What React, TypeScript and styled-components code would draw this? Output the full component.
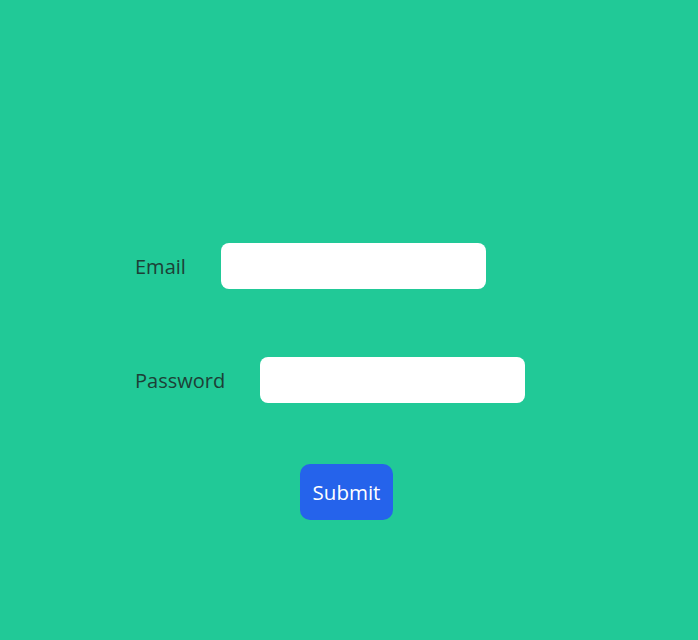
import React from "react";
import styled, { createGlobalStyle } from "styled-components";

const Global = createGlobalStyle`
  html, body { margin: 0; padding: 0; }
  body { background: #21c997; font-family: "Open Sans", "Noto Sans", sans-serif; }
`;

const Page = styled.div`
  min-height: 640px;
  background: #21c997;
  padding: 243px 0 0 135px;
  box-sizing: border-box;
`;

const Form = styled.form`
  display: flex;
  flex-direction: column;
  align-items: flex-start;
`;

const Row = styled.div<{ $gap: number }>`
  display: flex;
  align-items: center;
  margin-bottom: ${(p) => p.$gap}px;
`;

const Label = styled.label`
  font-size: 20px;
  color: #1d3f36;
  margin-right: 35px;
  line-height: 1;
  padding-top: 2px;
`;

const Input = styled.input`
  width: 265px;
  height: 46px;
  box-sizing: border-box;
  border: none;
  border-radius: 8px;
  background: #ffffff;
  outline: none;
  padding: 0 12px;
  font-size: 18px;
`;

const Actions = styled.div`
  padding-left: 165px;
`;

const Button = styled.button`
  width: 93px;
  height: 56px;
  padding: 0;
  border: none;
  border-radius: 10px;
  background: #2563eb;
  color: #ffffff;
  font-family: "Open Sans", "Noto Sans", sans-serif;
  font-size: 20.5px;
  cursor: pointer;
`;

export default function App() {
  return (
    <>
      <Global />
      <Page>
        <Form onSubmit={(e) => e.preventDefault()}>
          <Row $gap={68}>
            <Label htmlFor="email">Email</Label>
            <Input id="email" type="email" />
          </Row>
          <Row $gap={61}>
            <Label htmlFor="password">Password</Label>
            <Input id="password" type="password" />
          </Row>
          <Actions>
            <Button type="submit">Submit</Button>
          </Actions>
        </Form>
      </Page>
    </>
  );
}
